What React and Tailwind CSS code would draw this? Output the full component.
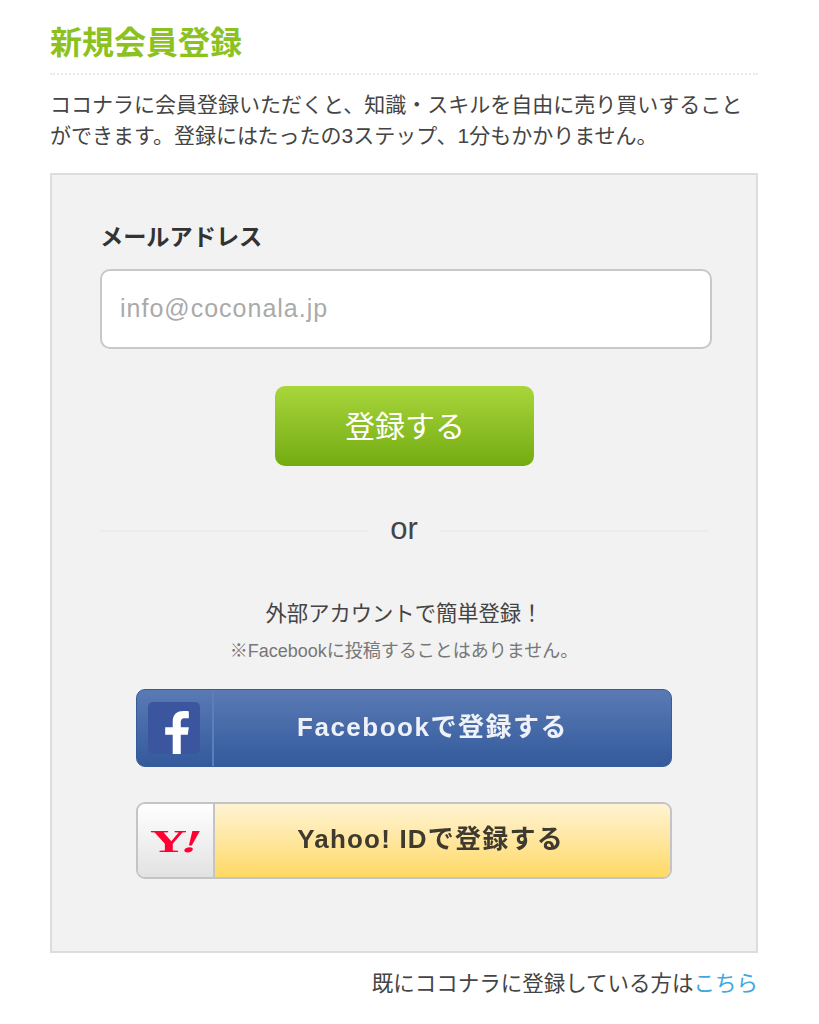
const cjk = "font-['Liberation_Sans','Noto_Sans_CJK_JP',sans-serif]";

function FacebookButton() {
  return (
    <a className="flex h-[78px] w-[536px] items-stretch rounded-[9px] border border-[#365c9a] bg-gradient-to-b from-[#5a7ab4] to-[#345a9c]">
      <div className="flex w-[77px] shrink-0 items-center justify-center border-r-2 border-[#5d7eb6] pr-[1px]">
        <div className="flex h-[52px] w-[52px] items-end justify-center rounded-[5px] bg-[#3b569e]">
          <svg viewBox="0 0 24 40" className="ml-[6px] h-[43px] w-[26px]">
            <path fill="#fff" d="M8 40V22H1v-7h7V10C8 3 12 0 18 0c2.500 0 4.500.2 5 .3v6.500h-3.500C16 6.800 15.500 8.500 15.500 11v4h7.500l-1 7h-6.500v18z" />
          </svg>
        </div>
      </div>
      <div className="flex flex-1 items-center justify-center pb-[3px] pr-[20px] text-[26px] font-bold leading-none tracking-[1.5px] text-[#eef1f7] blur-[0.5px]">
        Facebookで登録する
      </div>
    </a>
  );
}

function YahooButton() {
  return (
    <a className="flex h-[77px] w-[536px] items-stretch overflow-hidden rounded-[9px] border-2 border-[#c4c4c4]">
      <div className="flex w-[77px] shrink-0 items-center justify-center border-r-2 border-[#c4c4c4] bg-gradient-to-b from-white to-[#e2e2e2] pt-[1px]">
        <span className="mr-[4px] inline-block scale-x-[1.6] font-['Liberation_Serif',serif] text-[32px] font-bold leading-none tracking-[-2px] text-[#ff0033]">
          Y<span className="inline-block skew-x-[-14deg]">!</span>
        </span>
      </div>
      <div className="flex flex-1 items-center justify-center bg-gradient-to-b from-[#fff3d2] to-[#ffd961] pb-[3px] pr-[24px] text-[26px] font-bold leading-none tracking-[1.2px] text-[#3f3a30] blur-[0.5px]">
        Yahoo! IDで登録する
      </div>
    </a>
  );
}

export default function App() {
  return (
    <div className={`${cjk} h-[1024px] w-[819px] bg-white pl-[50px] pr-[61px] pt-[23px] text-[#333]`}>
      <h1 className="border-b-2 border-dotted border-[#eaeaea] pb-[10px] text-[32px] font-bold leading-[40px] text-[#8cc21f]">
        新規会員登録
      </h1>
      <p className="mt-[14px] text-[21px] leading-[31px] text-[#444]">
        ココナラに会員登録いただくと、知識・スキルを自由に売り買いすることができます。登録にはたったの3ステップ、1分もかかりません。
      </p>
      <div className="mt-[22px] h-[780px] border-2 border-[#dddddd] bg-[#f2f2f2] pl-[48px] pr-[44px] pt-[44px]">
        <label className="block text-[23.2px] font-bold leading-[36px] text-[#333]">メールアドレス</label>
        <div className="mt-[14px] flex h-[80px] w-[612px] items-center rounded-[10px] border-2 border-[#c8c8c8] bg-white px-[18px] text-[25px] tracking-[1px] text-[#aaa]">
          info@coconala.jp
        </div>
        <div className="mt-[37px] flex justify-center pr-[4px]">
          <button className="h-[80px] w-[259px] rounded-[10px] bg-gradient-to-b from-[#a8d63a] to-[#73ac0e] pl-[2px] pt-[1px] text-[30px] leading-none text-white">
            登録する
          </button>
        </div>
        <div className="mt-[45px] flex items-center gap-[22px] pr-[4px]">
          <div className="h-[2px] flex-1 bg-[#ececec]" />
          <span className="-translate-y-[2px] text-[31px] leading-[40px] text-[#444]">or</span>
          <div className="h-[2px] flex-1 bg-[#ececec]" />
        </div>
        <p className="mt-[47px] pr-[4px] text-center text-[21.3px] leading-[32px] text-[#444]">外部アカウントで簡単登録！</p>
        <p className="mt-[7px] pr-[4px] text-center text-[18px] leading-[28px] text-[#777]">※Facebookに投稿することはありません。</p>
        <div className="ml-[36px] mt-[24px] flex flex-col gap-[35px]">
          <FacebookButton />
          <YahooButton />
        </div>
      </div>
      <p className="mt-[15px] text-right text-[21.5px] leading-[32px] text-[#444]">
        既にココナラに登録している方は<span className="text-[#3fa9e0]">こちら</span>
      </p>
    </div>
  );
}
